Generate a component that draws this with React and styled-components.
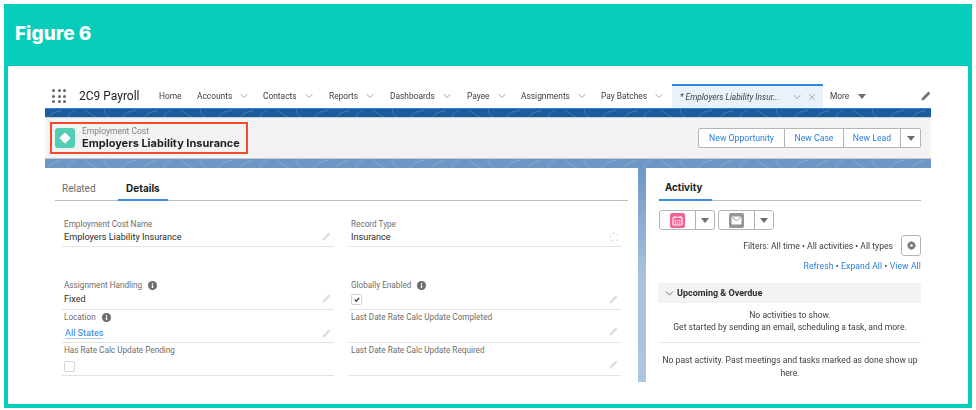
import styled, { createGlobalStyle } from "styled-components";
import { ChevronDown, X } from "lucide-react";

const GlobalStyle = createGlobalStyle`
  html, body {
    margin: 0;
    padding: 0;
    background: #fff;
  }
  * {
    box-sizing: border-box;
  }
`;

const Chevron = ({ size = 12, color = "#666" }) => (
  <ChevronDown size={size} color={color} strokeWidth={1.2} />
);

const Caret = ({ color = "#706e6b" }) => (
  <svg width="8" height="5" viewBox="0 0 8 5">
    <path d="M0 0h8L4 5z" fill={color} />
  </svg>
);

const Pencil = ({ color = "#dedede", size = 9 }) => (
  <svg width={size} height={size} viewBox="0 0 10 10">
    <path d="M7.4.6l2 2L3 9 .4 9.6 1 7z" fill={color} />
  </svg>
);

const Info = () => (
  <svg width="9" height="9" viewBox="0 0 10 10">
    <circle cx="5" cy="5" r="5" fill="#6b6b6b" />
    <rect x="4.2" y="4.2" width="1.6" height="3.6" fill="#fff" />
    <rect x="4.2" y="2.2" width="1.6" height="1.4" fill="#fff" />
  </svg>
);

const Texture = ({ id, color }) => (
  <TextureSvg>
    <defs>
      <pattern id={id} width="96" height="10" patternUnits="userSpaceOnUse">
        <path
          d="M2 10c3-5 8-8 14-8M22 10c2-4 3-7 8-9M40 0c4 5 10 8 15 10M60 0c-2 4 3 8 8 10M76 10c4-6 9-8 16-9"
          fill="none"
          stroke={color}
          strokeWidth="0.7"
        />
      </pattern>
    </defs>
    <rect width="100%" height="100%" fill={`url(#${id})`} />
  </TextureSvg>
);

const navItems = [
  { label: "Accounts", width: 66 },
  { label: "Contacts", width: 66 },
  { label: "Reports", width: 61 },
  { label: "Dashboards", width: 77 },
  { label: "Payee", width: 54 },
  { label: "Assignments", width: 80 },
  { label: "Pay Batches", width: 71 },
];

const App = () => {
  return (
    <>
      <GlobalStyle />
      <Figure>
        <FigureHead>Figure 6</FigureHead>
        <FigureBody>
          <Nav>
            <Launcher>
              {Array.from({ length: 9 }).map((_, i) => (
                <i key={i} />
              ))}
            </Launcher>
            <AppName>2C9 Payroll</AppName>
            <NavItem $width={38}>Home</NavItem>
            {navItems.map((item) => (
              <NavItem key={item.label} $width={item.width}>
                <span>{item.label}</span>
                <Chevron />
              </NavItem>
            ))}
            <ActiveTab>
              <em>* Employers Liability Insur...</em>
              <Chevron />
              <X size={10} color="#777" strokeWidth={1.3} />
            </ActiveTab>
            <NavItem $width={42} $more>
              <span>More</span>
              <Caret />
            </NavItem>
            <NavPencil>
              <Pencil color="#757575" size={10} />
            </NavPencil>
          </Nav>
          <DarkBand>
            <Texture id="dark" color="#4f86bf" />
          </DarkBand>
          <RecordHeader>
            <Highlight>
              <RecordIcon>
                <span />
              </RecordIcon>
              <RecordTitle>
                <small>Employment Cost</small>
                <strong>Employers Liability Insurance</strong>
              </RecordTitle>
            </Highlight>
            <ButtonGroup>
              <ActionButton $width={85}>New Opportunity</ActionButton>
              <ActionButton $width={59}>New Case</ActionButton>
              <ActionButton $width={57}>New Lead</ActionButton>
              <ActionButton $width={20}>
                <Caret />
              </ActionButton>
            </ButtonGroup>
          </RecordHeader>
          <LightBand>
            <Texture id="light" color="#8fb0d6" />
          </LightBand>
          <Columns>
            <DetailPanel>
              <Tabs>
                <Tab>Related</Tab>
                <Tab $active>Details</Tab>
              </Tabs>
              <FieldGrid>
                <Field $height={30} $gap={31}>
                  <label>Employment Cost Name</label>
                  <FieldValue $high>
                    Employers Liability Insurance
                    <Pencil />
                  </FieldValue>
                </Field>
                <Field $height={30} $gap={31}>
                  <label>Record Type</label>
                  <FieldValue $high>
                    Insurance
                    <LockMark />
                  </FieldValue>
                </Field>
                <Field $height={32}>
                  <label>
                    Assignment Handling <Info />
                  </label>
                  <FieldValue $high>
                    Fixed
                    <Pencil />
                  </FieldValue>
                </Field>
                <Field $height={32}>
                  <label>
                    Globally Enabled <Info />
                  </label>
                  <FieldValue>
                    <Checkbox>
                      <svg width="6" height="5" viewBox="0 0 7 6">
                        <path d="M.8 3.2l1.800 1.800L6.200 1" fill="none" stroke="#222" strokeWidth="1.300" />
                      </svg>
                    </Checkbox>
                    <Pencil />
                  </FieldValue>
                </Field>
                <Field>
                  <label>
                    Location <Info />
                  </label>
                  <FieldValue $low>
                    <FieldLink>All States</FieldLink>
                    <Pencil />
                  </FieldValue>
                </Field>
                <Field>
                  <label>Last Date Rate Calc Update Completed</label>
                  <FieldValue>
                    <span />
                    <Pencil />
                  </FieldValue>
                </Field>
                <Field>
                  <label>Has Rate Calc Update Pending</label>
                  <FieldValue $low>
                    <Checkbox />
                  </FieldValue>
                </Field>
                <Field>
                  <label>Last Date Rate Calc Update Required</label>
                  <FieldValue>
                    <span />
                    <Pencil />
                  </FieldValue>
                </Field>
              </FieldGrid>
            </DetailPanel>
            <ActivityPanel>
              <ActivityTabs>
                <ActivityTab>Activity</ActivityTab>
              </ActivityTabs>
              <Composer>
                <ComposerGroup>
                  <ComposerIcon>
                    <IconTile $color="#f2618f">
                      <svg width="11" height="11" viewBox="0 0 11 11">
                        <path
                          d="M1 2.200h9V10H1zM3 1v2M8 1v2"
                          fill="none"
                          stroke="#fff"
                          strokeWidth="1"
                        />
                        <path
                          d="M2.600 5h1.400v1.200H2.600zM4.800 5h1.400v1.200H4.800zM7 5h1.400v1.200H7zM2.600 7.200h1.400v1.200H2.600zM4.800 7.200h1.400v1.200H4.800zM7 7.200h1.400v1.200H7z"
                          fill="#fff"
                        />
                      </svg>
                    </IconTile>
                  </ComposerIcon>
                  <ComposerCaret>
                    <Caret />
                  </ComposerCaret>
                </ComposerGroup>
                <ComposerGroup>
                  <ComposerIcon>
                    <IconTile $color="#959595">
                      <svg width="11" height="9" viewBox="0 0 11 9">
                        <rect x="0.5" y="0.5" width="10" height="8" rx="1" fill="#fff" />
                        <path d="M1 1.200l4.500 3.600L10 1.200" fill="none" stroke="#959595" strokeWidth="0.9" />
                      </svg>
                    </IconTile>
                  </ComposerIcon>
                  <ComposerCaret>
                    <Caret />
                  </ComposerCaret>
                </ComposerGroup>
              </Composer>
              <FilterRow>
                <span>Filters: All time • All activities • All types</span>
                <GearButton>
                  <svg width="9" height="9" viewBox="0 0 10 10">
                    <path
                      d="M4 .3h2l.3 1.400 1.200-.7 1.400 1.400-.7 1.200 1.500.4v2l-1.500.3.7 1.300-1.400 1.400-1.200-.8-.3 1.500H4l-.4-1.500-1.200.8L1 7.600l.8-1.300L.3 6V4l1.500-.4L1 2.400 2.400 1l1.200.7z"
                      fill="#777"
                    />
                    <circle cx="5" cy="5" r="1.400" fill="#fff" />
                  </svg>
                </GearButton>
              </FilterRow>
              <LinkRow>
                <a>Refresh</a> • <a>Expand All</a> • <a>View All</a>
              </LinkRow>
              <SectionBar>
                <Chevron size={13} color="#333" />
                Upcoming &amp; Overdue
              </SectionBar>
              <EmptyNote>
                No activities to show.
                <br />
                Get started by sending an email, scheduling a task, and more.
              </EmptyNote>
              <PastNote>
                No past activity. Past meetings and tasks marked as done show up here.
              </PastNote>
            </ActivityPanel>
          </Columns>
        </FigureBody>
      </Figure>
    </>
  );
};

export default App;

const Figure = styled.div`
  margin: 4px 0 0 4px;
  width: 968px;
  height: 404px;
  border: solid #05cdb9;
  border-width: 0 4px 4px 4px;
  display: flex;
  flex-direction: column;
  background: #fff;
`;

const FigureHead = styled.div`
  flex: 0 0 62px;
  margin: 0 -4px;
  padding: 19px 0 0 11px;
  background: #05cdb9;
  color: #fff;
  font: 800 19px/22px "Inter", "Open Sans", sans-serif;
`;

const FigureBody = styled.div`
  flex: 1;
  padding: 18px 37px 0;
  font-family: "Roboto", "Liberation Sans", sans-serif;
  filter: blur(0.4px);
`;

const Nav = styled.div`
  height: 24px;
  display: flex;
  align-items: center;
  color: #3e3e3c;
  font-size: 8.4px;
`;

const Launcher = styled.div`
  width: 14px;
  margin-left: 7px;
  display: grid;
  grid-template-columns: repeat(3, 3px);
  gap: 2.5px;

  i {
    width: 3px;
    height: 3px;
    border-radius: 50%;
    background: #666;
  }
`;

const AppName = styled.div`
  width: 93px;
  padding-left: 13px;
  color: #222;
  font-size: 12px;
  white-space: nowrap;
`;

const NavItem = styled.div`
  flex: 0 0 ${(props) => props.$width}px;
  display: flex;
  align-items: center;
  gap: ${(props) => (props.$more ? "9px" : "6px")};
  white-space: nowrap;
`;

const ActiveTab = styled.div`
  flex: 0 0 151px;
  align-self: stretch;
  display: flex;
  align-items: center;
  gap: 4px;
  padding: 0 6px 0 8px;
  margin-right: 7px;
  background: #e9f2fb;
  border-top: 2px solid #2b86e6;
  white-space: nowrap;

  em {
    flex: 1;
    overflow: hidden;
  }
`;

const NavPencil = styled.div`
  margin-left: auto;
  display: flex;
`;

const DarkBand = styled.div`
  height: 9px;
  background: #1c5c9e;
  border-top: 1px solid #2a82dc;
  overflow: hidden;
`;

const TextureSvg = styled.svg`
  display: block;
  width: 100%;
  height: 100%;
`;

const RecordHeader = styled.div`
  height: 42px;
  padding: 0 10px 0 5px;
  display: flex;
  align-items: center;
  justify-content: space-between;
  background: #f3f3f3;
  border-top: 1px solid #cfcfcf;
  border-bottom: 1px solid #c8c8c8;
`;

const Highlight = styled.div`
  width: 198px;
  height: 32px;
  padding-left: 3px;
  display: flex;
  align-items: center;
  gap: 7px;
  border: 2px solid #f4492a;
`;

const RecordIcon = styled.div`
  width: 20px;
  height: 20px;
  display: flex;
  align-items: center;
  justify-content: center;
  background: #52cdb6;
  border-radius: 3px;

  span {
    width: 8px;
    height: 8px;
    background: #fff;
    border-radius: 1px;
    transform: rotate(45deg);
  }
`;

const RecordTitle = styled.div`
  display: flex;
  flex-direction: column;
  white-space: nowrap;

  small {
    color: #85827f;
    font-size: 8.5px;
    line-height: 10px;
  }

  strong {
    color: #1f1f1f;
    font-family: "Inter", sans-serif;
    font-size: 11px;
    font-weight: 700;
    line-height: 14px;
  }
`;

const ButtonGroup = styled.div`
  display: flex;
  height: 20px;
  background: #fff;
  border: 1px solid #b5b5b5;
  border-radius: 2px;
`;

const ActionButton = styled.div`
  flex: 0 0 ${(props) => props.$width}px;
  display: flex;
  align-items: center;
  justify-content: center;
  color: #2a7fd8;
  font-size: 8.7px;
  white-space: nowrap;

  & + & {
    border-left: 1px solid #b5b5b5;
  }
`;

const LightBand = styled.div`
  height: 9px;
  background: #6f97c6;
  overflow: hidden;
`;

const Columns = styled.div`
  height: 214px;
  display: flex;
  justify-content: space-between;
  overflow: hidden;
  background: linear-gradient(#6f97c6, #a9c1de 50%, #aec5e0);
`;

const DetailPanel = styled.div`
  width: 593px;
  padding: 0 10px;
  background: #fff;
`;

const Tabs = styled.div`
  height: 33px;
  display: flex;
  align-items: flex-end;
  gap: 13px;
  border-bottom: 1px solid #bdbdbd;
`;

const Tab = styled.div`
  height: 33px;
  width: 50px;
  padding: ${(props) => (props.$active ? "14px 0 0 8px" : "15px 0 0 7px")};
  margin-bottom: -1px;
  color: ${(props) => (props.$active ? "#1c1c1c" : "#6b6b6b")};
  font-family: ${(props) => (props.$active ? '"Inter", sans-serif' : "inherit")};
  font-size: 10px;
  font-weight: ${(props) => (props.$active ? 700 : 400)};
  border-bottom: 2px solid ${(props) => (props.$active ? "#3b8ee8" : "transparent")};
`;

const FieldGrid = styled.div`
  padding: 16px 7px 0;
  display: grid;
  grid-template-columns: 272px 272px;
  column-gap: 15px;
`;

const Field = styled.div`
  height: ${(props) => props.$height || 33}px;
  margin-bottom: ${(props) => props.$gap || 0}px;
  padding-bottom: 2px;
  display: flex;
  flex-direction: column;
  border-bottom: 1px solid #e3e3e3;

  label {
    padding: 1px 2px 0;
    display: flex;
    align-items: center;
    gap: 6px;
    height: 13px;
    color: #6f6d6b;
    font-size: 8.2px;
  }
`;

const FieldValue = styled.div`
  flex: 1;
  padding: ${(props) => (props.$low ? "3px" : "0")} 3px ${(props) => (props.$high ? "1px" : "0")} 2px;
  display: flex;
  align-items: center;
  justify-content: space-between;
  color: #2b2b2b;
  font-size: 9.1px;
`;

const FieldLink = styled.span`
  margin-left: 1px;
  color: #2a7fd8;
  border-bottom: 1px solid #a9cdf3;
  line-height: 10px;
`;

const LockMark = styled.span`
  width: 8px;
  height: 8px;
  border: 1px dashed #e2e2e2;
  border-radius: 2px;
`;

const Checkbox = styled.span`
  width: 11px;
  height: 11px;
  display: inline-flex;
  align-items: center;
  justify-content: center;
  border: 1px solid #d4d4d4;
  border-radius: 2px;
  background: #fff;
`;

const ActivityPanel = styled.div`
  width: 285px;
  padding: 0 10px 0 13px;
  background: #fff;
  color: #3e3e3c;
  font-size: 8.6px;
`;

const ActivityTabs = styled.div`
  height: 33px;
  border-bottom: 1px solid #bdbdbd;
`;

const ActivityTab = styled.div`
  width: 53px;
  height: 33px;
  padding: 14px 0 0 6px;
  color: #1c1c1c;
  font-family: "Inter", sans-serif;
  font-size: 9.8px;
  font-weight: 700;
  border-bottom: 2px solid #3b8ee8;
`;

const Composer = styled.div`
  margin-top: 9px;
  display: flex;
  gap: 3px;
`;

const ComposerGroup = styled.div`
  width: 56px;
  height: 20px;
  display: flex;
  border: 1px solid #b5b5b5;
  border-radius: 3px;
`;

const ComposerIcon = styled.div`
  flex: 1;
  display: flex;
  align-items: center;
  justify-content: center;
`;

const ComposerCaret = styled.div`
  flex: 0 0 19px;
  display: flex;
  align-items: center;
  justify-content: center;
  border-left: 1px solid #b5b5b5;
`;

const IconTile = styled.div`
  width: 15px;
  height: 15px;
  display: flex;
  align-items: center;
  justify-content: center;
  background: ${(props) => props.$color};
  border-radius: 2px;
`;

const FilterRow = styled.div`
  margin-top: 5px;
  display: flex;
  align-items: center;
  justify-content: flex-end;
  gap: 8px;
`;

const GearButton = styled.div`
  width: 20px;
  height: 21px;
  display: flex;
  align-items: center;
  justify-content: center;
  border: 1px solid #b5b5b5;
  border-radius: 3px;
`;

const LinkRow = styled.div`
  margin-top: 5px;
  line-height: 11px;
  text-align: right;
  letter-spacing: 0.1px;

  a {
    color: #2a7fd8;
  }
`;

const SectionBar = styled.div`
  margin: 11px 0 0 -1px;
  height: 20px;
  padding-left: 5px;
  display: flex;
  align-items: center;
  gap: 1px;
  background: #f3f3f3;
  border-radius: 2px;
  color: #2b2b2b;
  font-size: 9px;
  font-weight: 700;
`;

const EmptyNote = styled.div`
  padding: 6px 0 9px;
  line-height: 12px;
  text-align: center;
  border-bottom: 1px solid #e3e3e3;
`;

const PastNote = styled.div`
  padding: 11px 0 0;
  line-height: 12.500px;
  text-align: center;
`;
